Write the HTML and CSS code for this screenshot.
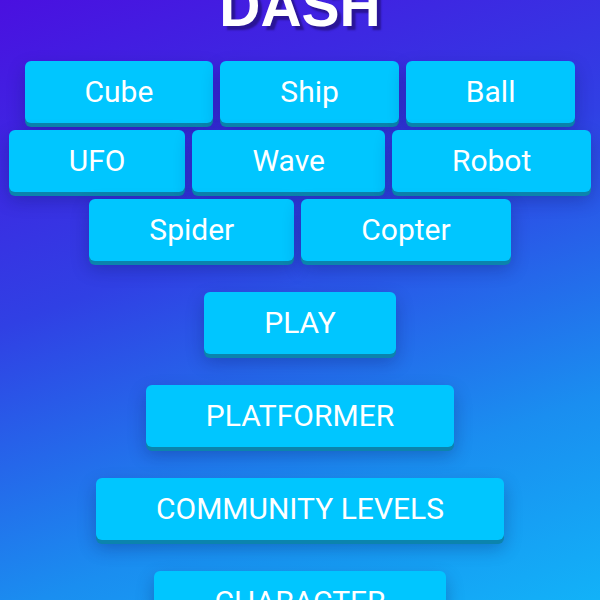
FILE: index.html
```html
<!DOCTYPE html>
<html lang="en">
<head>
<meta charset="utf-8">
<title>Geometry Dash</title>
<link rel="stylesheet" href="styles.css">
</head>
<body>
<main class="screen">
  <h1 class="title"><span class="title-line">GEOMETRY</span><span class="title-line">DASH</span></h1>
  <div class="modes">
    <div class="mode-row">
      <button class="btn">Cube</button>
      <button class="btn">Ship</button>
      <button class="btn">Ball</button>
    </div>
    <div class="mode-row">
      <button class="btn">UFO</button>
      <button class="btn">Wave</button>
      <button class="btn">Robot</button>
    </div>
    <div class="mode-row">
      <button class="btn">Spider</button>
      <button class="btn">Copter</button>
    </div>
  </div>
  <nav class="menu">
    <button class="btn">PLAY</button>
    <button class="btn">PLATFORMER</button>
    <button class="btn">COMMUNITY LEVELS</button>
    <button class="btn">CHARACTER</button>
  </nav>
</main>
</body>
</html>
```
FILE: styles.css
```css
html, body {
  margin: 0;
  height: 100%;
}

body {
  overflow: hidden;
  background: linear-gradient(160deg, #4a10e0 0%, #3040e4 40%, #1a8ef0 75%, #12b2f8 100%);
  font-family: Roboto, "Liberation Sans", sans-serif;
}

.screen {
  display: flex;
  flex-direction: column;
  align-items: center;
  margin-top: -87px;
}

.title {
  display: flex;
  flex-direction: column;
  align-items: center;
  margin: 0 0 24px;
  font-family: "Liberation Sans", Arial, sans-serif;
  font-weight: 700;
  font-size: 57px;
  line-height: 62px;
  color: #ffffff;
  text-shadow: 4px 4px 2px #2a1596;
}

.modes {
  display: flex;
  flex-direction: column;
  align-items: center;
  gap: 7px;
}

.mode-row {
  display: flex;
  justify-content: center;
  gap: 7px;
}

.menu {
  display: flex;
  flex-direction: column;
  align-items: center;
  gap: 31px;
  margin-top: 31px;
}

.btn {
  background: #00c6ff;
  color: #ffffff;
  border: 0;
  border-radius: 6px;
  padding: 13px 60px;
  font-family: Roboto, "Liberation Sans", sans-serif;
  font-weight: 400;
  font-size: 30px;
  line-height: 36px;
  white-space: nowrap;
  box-shadow: 0 4px 0 #0b84ad, 0 8px 18px rgba(10, 20, 90, 0.3);
}
```
